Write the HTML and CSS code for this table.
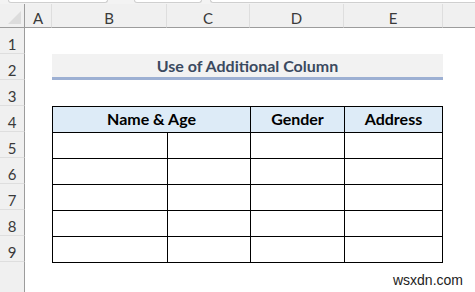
FILE: index.html
```html
<!DOCTYPE html>
<html lang="en">
  <head>
    <meta charset="UTF-8" />
    <title>Use of Additional Column</title>
    <link rel="stylesheet" href="styles.css">
  </head>
  <body>
    <div class="toolbar">
      <div class="box name-box"></div>
      <div class="box fx-box"></div>
      <div class="box formula-box"></div>
    </div>

    <div class="sheet">
      <div class="corner"><span class="corner-tri"></span></div>
      <div class="col-head">A</div>
      <div class="col-head">B</div>
      <div class="col-head">C</div>
      <div class="col-head">D</div>
      <div class="col-head">E</div>
      <div class="col-head last"></div>

      <div class="row-head">1</div>
      <div class="row-head">2</div>
      <div class="row-head">3</div>
      <div class="row-head">4</div>
      <div class="row-head">5</div>
      <div class="row-head">6</div>
      <div class="row-head">7</div>
      <div class="row-head">8</div>
      <div class="row-head">9</div>
      <div class="row-head rest"></div>

      <div class="title">Use of Additional Column</div>

      <table class="data">
        <colgroup>
          <col class="w-b" />
          <col class="w-c" />
          <col class="w-d" />
          <col />
        </colgroup>
        <thead>
          <tr>
            <th colspan="2">Name &amp; Age</th>
            <th>Gender</th>
            <th>Address</th>
          </tr>
        </thead>
        <tbody>
          <tr><td></td><td></td><td></td><td></td></tr>
          <tr><td></td><td></td><td></td><td></td></tr>
          <tr><td></td><td></td><td></td><td></td></tr>
          <tr><td></td><td></td><td></td><td></td></tr>
          <tr><td></td><td></td><td></td><td></td></tr>
        </tbody>
      </table>

      <div class="watermark">wsxdn.com</div>
    </div>
  </body>
</html>
```

FILE: styles.css
```css
* {
  box-sizing: border-box;
  margin: 0;
  padding: 0;
}
html,
body {
  height: 100%;
}
body {
  font-family: "Lato", "Open Sans", sans-serif;
  background: #fff;
  color: #000;
  display: flex;
  flex-direction: column;
  overflow: hidden;
}

/* formula bar remnants at the very top */
.toolbar {
  height: 4px;
  background: #f3f3f3;
  display: flex;
  flex-shrink: 0;
}
.box {
  height: 3px;
  background: #fff;
  border: 1px solid #cfcfcf;
  border-top: none;
  border-radius: 0 0 4px 4px;
}
.name-box {
  margin-left: 8px;
  width: 100px;
}
.fx-box {
  margin-left: 26px;
  width: 68px;
}
.formula-box {
  margin-left: 8px;
  flex: 1;
  border-right: none;
  border-radius: 0 0 0 4px;
}

.sheet {
  flex: 1;
  position: relative;
  display: grid;
  grid-template-columns: 25px 27px 115px 83px 94px 99px 1fr;
  grid-template-rows: 24px repeat(9, 26px) 1fr;
}

.corner {
  background: #f0f0f0;
  border-right: 1px solid #9c9c9c;
  border-bottom: 1px solid #9c9c9c;
  position: relative;
}
.corner-tri {
  position: absolute;
  right: 3px;
  bottom: 3px;
  width: 0;
  height: 0;
  border-left: 13px solid transparent;
  border-bottom: 13px solid #dcdcdc;
}
.col-head {
  background: #f0f0f0;
  border-right: 1px solid #dedede;
  border-bottom: 1px solid #9c9c9c;
  color: #3a3a3a;
  font-size: 15px;
  display: flex;
  align-items: center;
  justify-content: center;
  padding-top: 5px;
}
.col-head.last {
  border-right: none;
}
.row-head {
  grid-column: 1;
  background: #f0f0f0;
  border-right: 1px solid #9c9c9c;
  border-bottom: 1px solid #dedede;
  color: #3a3a3a;
  font-size: 15px;
  display: flex;
  align-items: center;
  justify-content: center;
  padding-top: 6px;
}
.row-head.rest {
  border-bottom: none;
}

.title {
  grid-column: 3 / 7;
  grid-row: 3;
  background: #f2f2f2;
  border-bottom: 3px solid #9db0d3;
  color: #3b4a60;
  font-weight: 700;
  font-size: 16px;
  display: flex;
  align-items: center;
  justify-content: center;
  padding-top: 0;
}

.data {
  grid-column: 3 / 7;
  grid-row: 5 / 11;
  border-collapse: collapse;
  width: 100%;
  height: 100%;
  table-layout: fixed;
}
.data th,
.data td {
  border: 1.5px solid #000;
  height: 26px;
}
.data th {
  background: #ddebf7;
  font-weight: 700;
  font-size: 16px;
  text-align: center;
  padding-bottom: 2px;
}
.w-b {
  width: 115px;
}
.w-c {
  width: 83px;
}
.w-d {
  width: 94px;
}

.watermark {
  position: absolute;
  right: 12px;
  bottom: 4px;
  font-family: "Liberation Sans", sans-serif;
  font-size: 14px;
  color: #222;
}
```
